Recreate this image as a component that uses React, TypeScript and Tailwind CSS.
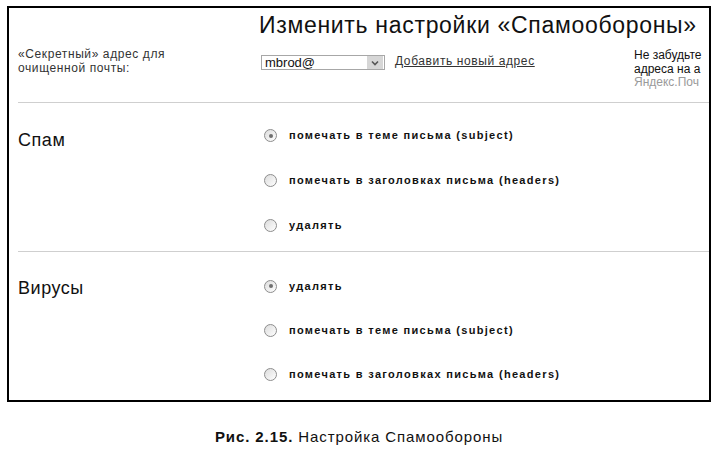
import { ReactNode } from 'react'

function Radio({ checked }: { checked?: boolean }) {
  return (
    <span className="flex h-[13px] w-[13px] shrink-0 items-center justify-center rounded-full border border-[#8d8d8d] bg-gradient-to-br from-[#dcdcdc] to-white">
      {checked && <span className="h-[4px] w-[4px] rounded-full bg-[#6f6f6f]" />}
    </span>
  )
}

function Option({ checked, children, h }: { checked?: boolean; children: ReactNode; h: string }) {
  return (
    <div className={`flex items-center ${h}`}>
      <Radio checked={checked} />
      <span className="ml-[12px] whitespace-nowrap text-[11px] font-bold tracking-[0.12em] text-[#111]">
        {children}
      </span>
    </div>
  )
}

function Section({
  title,
  titlePad,
  listPad,
  rowH,
  options,
}: {
  title: string
  titlePad: string
  listPad: string
  rowH: string
  options: { label: string; checked?: boolean }[]
}) {
  return (
    <div className="flex">
      <div className={`w-[250px] pl-[9px] ${titlePad}`}>
        <h2 className="text-[18px] leading-none tracking-[0.03em] text-[#111]">{title}</h2>
      </div>
      <div className={`pl-[5px] ${listPad}`}>
        {options.map((o) => (
          <Option key={o.label} checked={o.checked} h={rowH}>
            {o.label}
          </Option>
        ))}
      </div>
    </div>
  )
}

export default function App() {
  return (
    <div className="h-[450px] w-[718px] bg-white pt-[6px] font-['Liberation_Sans',Arial,sans-serif] text-black">
      <div className="ml-[7px] h-[396px] w-[704px] overflow-hidden border-2 border-black">
        {/* header */}
        <div className="h-[94px]">
          <div className="pl-[250px] pt-[6px]">
            <h1 className="whitespace-nowrap text-[23px] leading-none tracking-[0.03em] text-[#111]">
              Изменить настройки «Спамообороны»
            </h1>
          </div>
          <div className="mt-[10px] grid grid-cols-[250px_375px_1fr] text-[12px] leading-[14px] tracking-[0.05em]">
            <div className="pl-[9px] text-[#333]">
              «Секретный» адрес для
              <br />
              очищенной почты:
            </div>
            <div className="flex items-start pt-[8px]">
              <div className="ml-[2px] flex h-[15px] w-[124px] items-center border border-[#a7a7a7] bg-white">
                <span className="flex-1 pl-[3px] text-[13px] leading-none tracking-normal text-[#111]">mbrod@</span>
                <span className="mr-px flex h-[13px] w-[16px] items-center justify-center bg-[#d6d6d6]">
                  <svg width="8" height="6" viewBox="0 0 8 6">
                    <path d="M1 1.5 L4 4.5 L7 1.5" fill="none" stroke="#555" strokeWidth="1.6" />
                  </svg>
                </span>
              </div>
              <a className="ml-[10px] -mt-px whitespace-nowrap text-[#333] underline">Добавить новый адрес</a>
            </div>
            <div className="overflow-hidden whitespace-nowrap pt-[2px] leading-[13.5px] tracking-normal text-[#111]">
              Не забудьте
              <br />
              адреса на а
              <br />
              <span className="text-[#9a9a9a]">Яндекс.Поч</span>
            </div>
          </div>
        </div>
        <div className="ml-[9px] h-px bg-[#cfcfcf]" />

        <Section
          title="Спам"
          titlePad="pt-[28px]"
          listPad="pt-[10px] pb-[3px]"
          rowH="h-[45px]"
          options={[
            { label: 'помечать в теме письма (subject)', checked: true },
            { label: 'помечать в заголовках письма (headers)' },
            { label: 'удалять' },
          ]}
        />
        <div className="ml-[9px] h-px bg-[#cfcfcf]" />

        <Section
          title="Вирусы"
          titlePad="pt-[27px]"
          listPad="pt-[12px]"
          rowH="h-[44px]"
          options={[
            { label: 'удалять', checked: true },
            { label: 'помечать в теме письма (subject)' },
            { label: 'помечать в заголовках письма (headers)' },
          ]}
        />
      </div>

      <p className="mt-[27px] text-center text-[15px] leading-none tracking-[0.06em] text-[#111]">
        <b>Рис. 2.15.</b> Настройка Спамообороны
      </p>
    </div>
  )
}
